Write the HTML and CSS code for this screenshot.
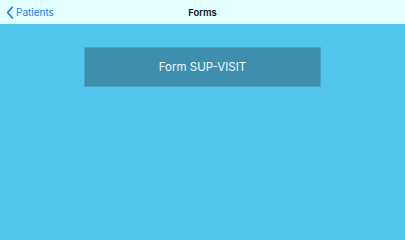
FILE: index.html
```html
<!DOCTYPE html>
<html>
<head>
<meta charset="utf-8">
<link rel="stylesheet" href="styles.css">
</head>
<body>
<div class="nav">
  <div class="back">
    <svg class="chev" width="8" height="13" viewBox="0 0 8 13"><path d="M6.3 1.2 L1.6 6.5 L6.3 11.8" fill="none" stroke="#1b7ff3" stroke-width="1.7" stroke-linecap="round" stroke-linejoin="round"/></svg>
    <span class="back-label">Patients</span>
  </div>
  <div class="title">Forms</div>
</div>
<main class="content">
  <div class="card">Form SUP-VISIT</div>
</main>
</body>
</html>
```
FILE: styles.css
```css
html, body { margin: 0; padding: 0; }
body {
  width: 405px;
  height: 228px;
  background: #53c6ee;
  font-family: Inter, "Liberation Sans", sans-serif;
  overflow: hidden;
}
.nav {
  position: relative;
  height: 24px;
  background: #e2fefe;
  display: flex;
  align-items: center;
  justify-content: center;
}
.back {
  position: absolute;
  left: 6px;
  top: 0;
  height: 24px;
  display: flex;
  align-items: center;
  gap: 2px;
  color: #1b7ff3;
  font-size: 10px;
}
.chev { display: block; }
.title {
  font-size: 9.5px;
  font-weight: 600;
  color: #111;
}
.content {
  padding-top: 23px;
  display: flex;
  justify-content: center;
}
.card {
  width: 235px;
  height: 38px;
  border: 1px solid #4aa6c8;
  background: #3d8fad;
  color: #eef8fc;
  font-size: 11.5px;
  display: flex;
  align-items: center;
  justify-content: center;
}
```
